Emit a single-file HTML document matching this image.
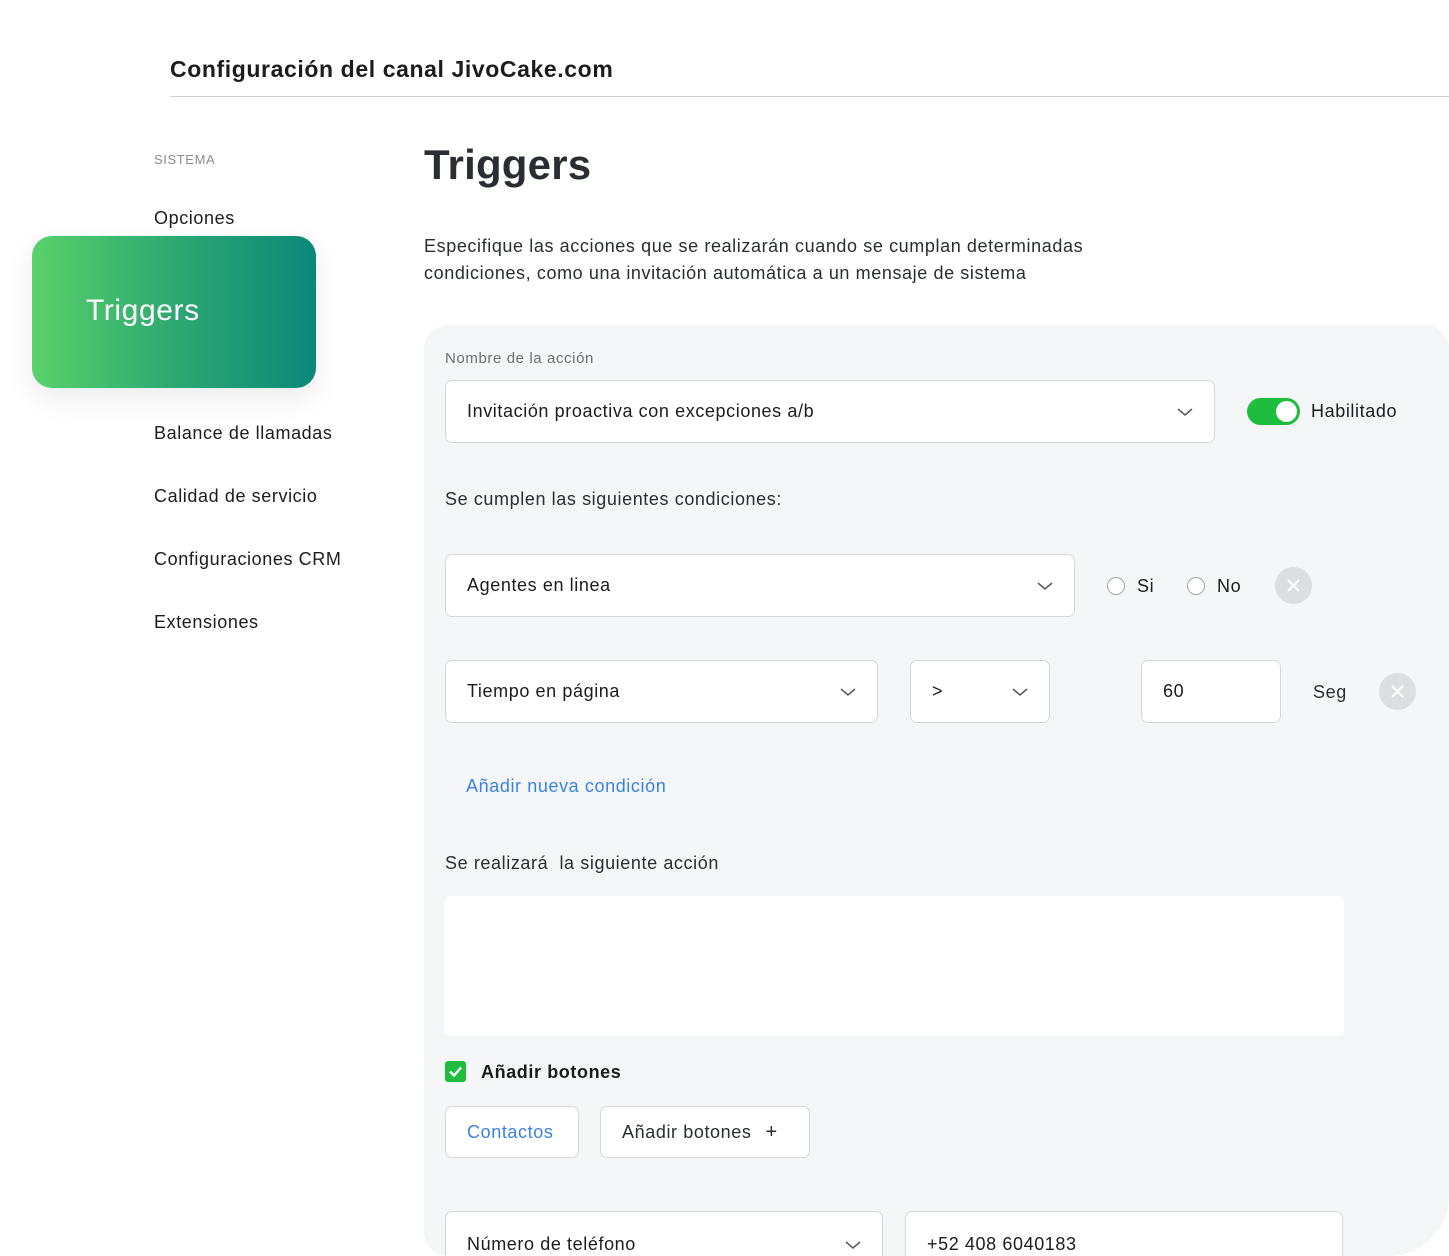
<!DOCTYPE html>
<html style="overflow:hidden;height:1256px"><head><meta charset="utf-8"><style>
*{box-sizing:border-box;margin:0;padding:0}
body{width:1449px;height:1256px;background:#fff;font-family:"Liberation Sans",sans-serif;color:#1c1c1e;position:relative;overflow:hidden;letter-spacing:0.6px}
.a{position:absolute;white-space:nowrap}
.box{position:absolute;background:#fff;border:1px solid #d6d8dc;border-radius:7px;font-size:18px;color:#1c1c1e;padding-left:21px;display:flex;align-items:center}
.chev{position:absolute;top:50%;margin-top:-5px}
.x{position:absolute;width:37px;height:37px;border-radius:50%;background:#dcdee2}
.radio{position:absolute;width:18px;height:18px;border:1.5px solid #a3a6ab;border-radius:50%;background:#fff}
</style></head><body>
<div class="a" style="left:170px;top:56px;font-size:23px;font-weight:bold;color:#1c1c1e">Configuración del canal JivoCake.com</div>
<div class="a" style="left:170px;top:96px;width:1279px;height:1px;background:#cfd1d4"></div>

<div class="a" style="left:154px;top:152px;font-size:13px;color:#8a8d92;letter-spacing:0.6px">SISTEMA</div>
<div class="a" style="left:154px;top:208px;font-size:18px">Opciones</div>
<div class="a" style="left:32px;top:236px;width:284px;height:152px;border-radius:20px;background:linear-gradient(90deg,#5ad16a,#2ea872 50%,#0a8878);box-shadow:0 10px 30px rgba(0,0,0,0.08)"></div>
<div class="a" style="left:86px;top:294px;font-size:30px;color:#fff">Triggers</div>
<div class="a" style="left:154px;top:423px;font-size:18px">Balance de llamadas</div>
<div class="a" style="left:154px;top:486px;font-size:18px">Calidad de servicio</div>
<div class="a" style="left:154px;top:549px;font-size:18px">Configuraciones CRM</div>
<div class="a" style="left:154px;top:612px;font-size:18px">Extensiones</div>

<div class="a" style="left:424px;top:141px;font-size:42px;font-weight:bold;color:#2a2d31;letter-spacing:0.2px">Triggers</div>
<div class="a" style="left:424px;top:233px;font-size:18px;line-height:27px;color:#2a2d31">Especifique las acciones que se realizarán cuando se cumplan determinadas<br>condiciones, como una invitación automática a un mensaje de sistema</div>

<div class="a" style="left:424px;top:325px;width:1025px;height:931px;background:#f5f6f8;border-radius:24px 24px 60px 24px"></div>
<div class="a" style="left:445px;top:350px;font-size:15px;color:#6b6e73">Nombre de la acción</div>
<div class="box" style="left:445px;top:380px;width:770px;height:63px">Invitación proactiva con excepciones a/b
<svg class="chev" style="right:21px" width="16" height="10"><path d="M1 2l7 6 7-6" fill="none" stroke="#5a5d62" stroke-width="1.6"/></svg></div>
<div class="a" style="left:1247px;top:398px;width:53px;height:27px;border-radius:14px;background:#1fbd3e"><div style="position:absolute;right:3px;top:3px;width:21px;height:21px;border-radius:50%;background:#fff"></div></div>
<div class="a" style="left:1311px;top:401px;font-size:18px">Habilitado</div>

<div class="a" style="left:445px;top:489px;font-size:18px;color:#2a2d31">Se cumplen las siguientes condiciones:</div>
<div class="box" style="left:445px;top:554px;width:630px;height:63px">Agentes en linea
<svg class="chev" style="right:21px" width="16" height="10"><path d="M1 2l7 6 7-6" fill="none" stroke="#5a5d62" stroke-width="1.6"/></svg></div>
<div class="radio" style="left:1107px;top:577px"></div>
<div class="a" style="left:1137px;top:576px;font-size:18px">Si</div>
<div class="radio" style="left:1187px;top:577px"></div>
<div class="a" style="left:1217px;top:576px;font-size:18px">No</div>
<div class="x" style="left:1275px;top:567px"><svg width="37" height="37"><path d="M13 13l11 11M24 13l-11 11" stroke="#fff" stroke-width="2"/></svg></div>

<div class="box" style="left:445px;top:660px;width:433px;height:63px">Tiempo en página
<svg class="chev" style="right:21px" width="16" height="10"><path d="M1 2l7 6 7-6" fill="none" stroke="#5a5d62" stroke-width="1.6"/></svg></div>
<div class="box" style="left:910px;top:660px;width:140px;height:63px">&gt;
<svg class="chev" style="right:21px" width="16" height="10"><path d="M1 2l7 6 7-6" fill="none" stroke="#5a5d62" stroke-width="1.6"/></svg></div>
<div class="box" style="left:1141px;top:660px;width:140px;height:63px">60</div>
<div class="a" style="left:1313px;top:682px;font-size:18px;color:#2a2d31">Seg</div>
<div class="x" style="left:1379px;top:673px"><svg width="37" height="37"><path d="M13 13l11 11M24 13l-11 11" stroke="#fff" stroke-width="2"/></svg></div>

<div class="a" style="left:466px;top:776px;font-size:18px;color:#3b82e0">Añadir nueva condición</div>
<div class="a" style="left:445px;top:853px;font-size:18px;color:#2a2d31">Se realizará &nbsp;la siguiente acción</div>
<div class="a" style="left:444px;top:896px;width:900px;height:140px;background:#fff;border-radius:6px"></div>

<div class="a" style="left:445px;top:1061px;width:21px;height:21px;border-radius:3px;background:#1fbd3e"><svg width="21" height="21"><path d="M5 10.5l4 4 7-8" fill="none" stroke="#fff" stroke-width="2.4"/></svg></div>
<div class="a" style="left:481px;top:1062px;font-size:18px;font-weight:bold">Añadir botones</div>
<div class="box" style="left:445px;top:1106px;width:134px;height:52px;color:#3b82e0">Contactos</div>
<div class="box" style="left:600px;top:1106px;width:210px;height:52px;color:#2a2d31">Añadir botones <span style="margin-left:14px;font-size:20px">+</span></div>

<div class="box" style="left:445px;top:1211px;width:438px;height:70px;align-items:flex-start;padding-top:22px">Número de teléfono
<svg class="chev" style="right:21px;top:28px;margin:0" width="16" height="10"><path d="M1 2l7 6 7-6" fill="none" stroke="#5a5d62" stroke-width="1.6"/></svg></div>
<div class="box" style="left:905px;top:1211px;width:438px;height:70px;align-items:flex-start;padding-top:22px">+52 408 6040183</div>
</body></html>
